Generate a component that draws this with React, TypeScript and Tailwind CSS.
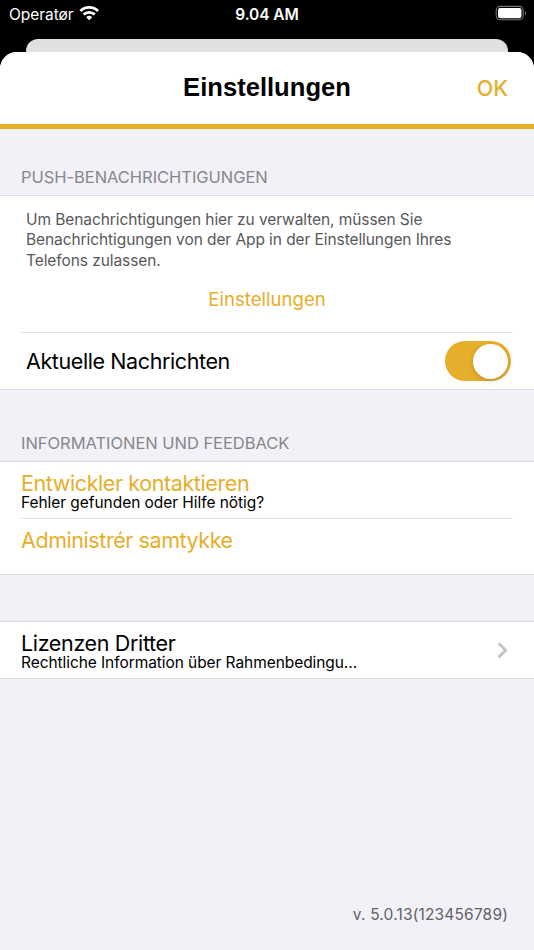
import React from "react";

const FONT = "font-['Inter','Liberation_Sans',sans-serif]";

function StatusBar() {
  return (
    <div className="relative flex h-[39px] shrink-0 items-start justify-between pl-[9px] pr-[6px] text-white">
      <div className="flex items-start">
        <span className="mt-[5px] whitespace-nowrap text-[15.5px] leading-[20px] tracking-[-0.05px]">Operatør</span>
        <svg className="ml-[5px] mt-[5px]" width="20" height="16" viewBox="0 0 20 16">
          <g fill="none" stroke="white" strokeWidth="2.8">
            <path d="M1.4 6.1 A12.4 12.4 0 0 1 19 6.1" />
            <path d="M4.6 9.6 A8 8 0 0 1 15.8 9.6" />
          </g>
          <path d="M10.2 15.3 L7.2 12.2 A4.3 4.3 0 0 1 13.2 12.2 Z" fill="white" />
        </svg>
      </div>
      <span className="absolute left-0 right-0 top-[5px] text-center text-[15.5px] font-semibold leading-[20px] tracking-[-0.1px]">9.04 AM</span>
      <svg className="mt-[5px]" width="33" height="16" viewBox="0 0 33 16">
        <rect x="1.2" y="1.4" width="27" height="13.4" rx="4" fill="none" stroke="#77777a" strokeWidth="1.1" />
        <rect x="3" y="3" width="23.5" height="10.2" rx="2.2" fill="white" />
        <path d="M30 5.8 Q32.4 8.1 30 10.4 Z" fill="#77777a" />
      </svg>
    </div>
  );
}

function SectionLabel({ children }: { children: React.ReactNode }) {
  return <h2 className="whitespace-nowrap pl-[21px] text-[16.5px] leading-[20px] tracking-[-0.04px] text-[#88878c]">{children}</h2>;
}

export default function App() {
  return (
    <div className={`${FONT} flex h-[950px] w-[534px] flex-col overflow-hidden bg-black`}>
      <StatusBar />
      <div className="mx-[26px] h-[13px] shrink-0 rounded-t-[12px] bg-[#e0e0e0]" />
      <main className="flex flex-1 flex-col overflow-hidden rounded-t-[17px] bg-[#f2f1f7]">
        <header className="relative flex h-[77px] shrink-0 items-start justify-center border-b-[5px] border-[#e6ae2a] bg-white">
          <h1 className="mt-[20px] font-['Liberation_Sans',sans-serif] text-[25.6px] font-bold leading-[30px] text-black">Einstellungen</h1>
          <button className="absolute right-[26px] top-[21px] text-[21.5px] font-medium leading-[30px] text-[#e6ae2a]">OK</button>
        </header>

        <div className="h-[66px] shrink-0 pt-[38px]">
          <SectionLabel>PUSH-BENACHRICHTIGUNGEN</SectionLabel>
        </div>
        <section className="flex h-[195px] shrink-0 flex-col border-y border-[#dddce0] bg-white">
          <p className="whitespace-nowrap pl-[26px] pt-[13.6px] text-[15.5px] leading-[20.7px] tracking-[-0.08px] text-[#58585a]">
            Um Benachrichtigungen hier zu verwalten, müssen Sie<br />
            Benachrichtigungen von der App in der Einstellungen Ihres<br />
            Telefons zulassen.
          </p>
          <button className="mt-[15.4px] text-center text-[18.6px] leading-[24px] text-[#e6ae2a]">Einstellungen</button>
          <div className="ml-[21px] mr-[21px] mt-auto flex h-[57px] items-center justify-between border-t border-[#e4e4e6] pl-[5px] pr-[2px]">
            <span className="text-[21.5px] leading-[28px] tracking-[-0.4px] text-black">Aktuelle Nachrichten</span>
            <span className="flex h-[40px] w-[66px] items-center justify-end rounded-full bg-[#e6ae2a] pr-[3px]">
              <span className="h-[35px] w-[35px] rounded-full bg-white shadow-[0_2px_5px_rgba(0,0,0,0.16)]" />
            </span>
          </div>
        </section>

        <div className="h-[71px] shrink-0 pt-[43px]">
          <SectionLabel>INFORMATIONEN UND FEEDBACK</SectionLabel>
        </div>
        <section className="h-[114px] shrink-0 border-y border-[#dddce0] bg-white pl-[21px] pr-[21px]">
          <div className="h-[57px] border-b border-[#e4e4e6] pt-[9px]">
            <div className="text-[21.5px] leading-[24px] tracking-[-0.4px] text-[#e6ae2a]">Entwickler kontaktieren</div>
            <div className="text-[15.5px] leading-[16px] tracking-[-0.05px] text-black">Fehler gefunden oder Hilfe nötig?</div>
          </div>
          <div className="pt-[8px] text-[21.5px] leading-[26px] tracking-[-0.43px] text-[#e6ae2a]">Administrér samtykke</div>
        </section>

        <section className="mt-[46px] flex h-[58px] shrink-0 justify-between border-y border-[#dddce0] bg-white pl-[21px] pr-[26px]">
          <div className="pt-[9px] text-black">
            <div className="text-[21.5px] leading-[24px] tracking-[-0.35px]">Lizenzen Dritter</div>
            <div className="text-[15.5px] leading-[16px] tracking-[-0.07px]">Rechtliche Information über Rahmenbedingu...</div>
          </div>
          <svg className="mt-[20px]" width="11" height="17" viewBox="0 0 11 17">
            <path d="M1.7 1.3 L8.7 8.3 L1.7 15.3" fill="none" stroke="#c3c3c6" strokeWidth="2.8" />
          </svg>
        </section>

        <footer className="mt-auto pb-[25px] pr-[26px] text-right text-[15.5px] leading-[20px] tracking-[0.17px] text-[#626266]">v. 5.0.13(123456789)</footer>
      </main>
    </div>
  );
}
